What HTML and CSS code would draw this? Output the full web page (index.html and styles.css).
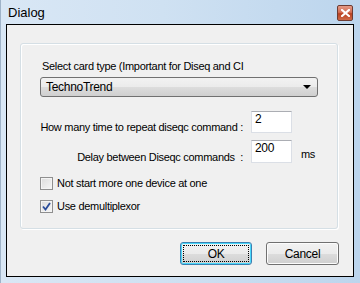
FILE: index.html
```html
<!DOCTYPE html>
<html lang="en">
<head>
    <meta charset="UTF-8">
    <title>Dialog</title>
    <link rel="stylesheet" href="styles.css">
</head>
<body>
    <div class="window">
        <div class="titlebar">
            <span class="title">Dialog</span>
            <span class="close-btn">
                <svg width="9" height="8" viewBox="0 0 9 8">
                    <path d="M1 1 L8 7 M8 1 L1 7" stroke="#fff" stroke-width="2.2" stroke-linecap="square"/>
                </svg>
            </span>
        </div>
        <div class="client">
            <div class="group-box">
                <div class="combo-label">Select card type (Important for Diseq and CI</div>
                <div class="combo">
                    <span>TechnoTrend</span>
                    <span class="combo-arrow"></span>
                </div>
                <div class="field-row first">
                    <span class="field-label">How many time to repeat diseqc command :</span>
                    <span class="edit">2</span>
                </div>
                <div class="field-row">
                    <span class="field-label">Delay between Diseqc commands&nbsp; :</span>
                    <span class="edit tall">200</span>
                    <span class="unit">ms</span>
                </div>
                <div class="check-row first">
                    <span class="check-box"></span>
                    <span>Not start more one device at one</span>
                </div>
                <div class="check-row">
                    <span class="check-box">
                        <svg width="9" height="9" viewBox="0 0 9 9">
                            <path d="M1 4.5 L3.5 7.5 L8 1" fill="none" stroke="#2a4c99" stroke-width="1.8"/>
                        </svg>
                    </span>
                    <span>Use demultiplexor</span>
                </div>
            </div>
            <div class="button-row">
                <div class="button default"><span class="focus">OK</span></div>
                <div class="button">Cancel</div>
            </div>
        </div>
    </div>
</body>
</html>
```

FILE: styles.css
```css
/* Vista style dialog */
body {
    margin: 0;
    font-family: "Liberation Sans", Arial, sans-serif;
    font-size: 11px;
    letter-spacing: -0.3px;
    color: #000;
}
.window {
    width: 360px;
    height: 283px;
    display: flex;
    flex-direction: column;
    box-sizing: border-box;
    background: linear-gradient(to right, #d9e7f5 0%, #cfe1f2 45%, #bcd5ed 100%);
    border-left: 1px solid #9fb3c8;
}
.titlebar {
    height: 24px;
    display: flex;
    align-items: flex-start;
    flex-shrink: 0;
}
.title {
    font-size: 13px;
    line-height: 15px;
    letter-spacing: 0;
    padding: 5px 0 0 7px;
}
.close-btn {
    margin: 5px 7px 0 auto;
    width: 16px;
    height: 16px;
    box-sizing: border-box;
    border: 1px solid #6d3c33;
    border-radius: 2px;
    background: linear-gradient(#e49a86 0%, #d36e54 45%, #b8401f 55%, #cf6a47 100%);
    display: flex;
    align-items: center;
    justify-content: center;
}
.client {
    flex: 1;
    margin: 0 6px 6px 5px;
    border: 1px solid #000;
    background: #f0f0f0;
    display: flex;
    flex-direction: column;
}
.group-box {
    margin: 18px 15px 0 13px;
    height: 186px;
    box-sizing: border-box;
    border: 1px solid #d5dfe5;
    border-radius: 3px;
    box-shadow: inset 1px 1px 0 #fff, 1px 1px 0 #fff;
    padding: 16px 0 0 19px;
}
.combo-label {
    line-height: 13px;
    padding-left: 2px;
    white-space: nowrap;
}
.combo {
    margin-top: 4px;
    width: 278px;
    height: 20px;
    box-sizing: border-box;
    border: 1px solid #707070;
    border-radius: 3px;
    background: linear-gradient(#f2f2f2 0%, #ebebeb 50%, #dddddd 50%, #cfcfcf 100%);
    display: flex;
    align-items: center;
    padding: 0 6px 0 5px;
    font-size: 12px;
}
.combo-arrow {
    margin-left: auto;
    width: 0;
    height: 0;
    border-left: 4px solid transparent;
    border-right: 4px solid transparent;
    border-top: 4px solid #000;
}
.field-row {
    display: flex;
    align-items: flex-end;
    margin-top: 7px;
    margin-left: -4px;
}
.field-row.first {
    margin-top: 14px;
}
.field-label {
    width: 207px;
    text-align: right;
    white-space: nowrap;
    line-height: 13px;
    margin-bottom: -1px;
}
.edit {
    margin-left: 8px;
    width: 41px;
    height: 22px;
    box-sizing: border-box;
    background: #fff;
    border: 1px solid #dbdfe6;
    border-top-color: #abadb3;
    font-size: 12px;
    line-height: 13px;
    padding: 1px 0 0 3px;
}
.edit.tall {
    height: 23px;
}
.unit {
    margin-left: 9px;
    line-height: 13px;
    margin-bottom: 2px;
}
.check-row {
    display: flex;
    align-items: center;
    gap: 4px;
    margin-top: 10px;
    line-height: 13px;
}
.check-row.first {
    margin-top: 14px;
}
.check-box {
    width: 13px;
    height: 13px;
    box-sizing: border-box;
    border: 1px solid #8f8f8f;
    background: linear-gradient(135deg, #dcdcdc, #f6f6f6);
    box-shadow: inset 0 0 0 1px #f4f4f4;
    display: flex;
    align-items: center;
    justify-content: center;
}
.button-row {
    display: flex;
    justify-content: flex-end;
    gap: 14px;
    padding: 13px 14px 0 0;
}
.button {
    width: 73px;
    height: 23px;
    box-sizing: border-box;
    border: 1px solid #707070;
    border-radius: 3px;
    background: linear-gradient(#f2f2f2 0%, #ebebeb 50%, #dddddd 50%, #cfcfcf 100%);
    box-shadow: inset 0 0 0 1px #fcfcfc;
    display: flex;
    align-items: center;
    justify-content: center;
    font-size: 12px;
}
.button.default {
    width: 72px;
    border-color: #3c7fb1;
    box-shadow: inset 0 0 0 1px #48d8fb;
    padding: 2px;
}
.focus {
    flex: 1;
    align-self: stretch;
    border: 1px dotted #000;
    display: flex;
    align-items: center;
    justify-content: center;
}
```
